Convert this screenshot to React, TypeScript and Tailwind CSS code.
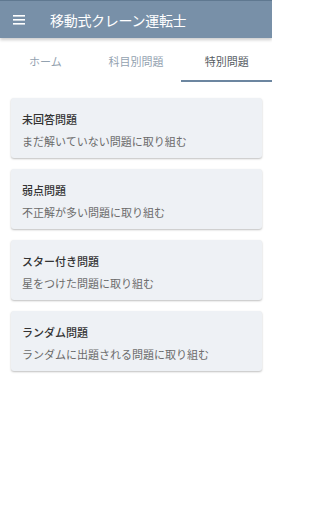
import React, { useState } from "react";

const tabs = ["ホーム", "科目別問題", "特別問題"];

const items = [
  { title: "未回答問題", desc: "まだ解いていない問題に取り組む" },
  { title: "弱点問題", desc: "不正解が多い問題に取り組む" },
  { title: "スター付き問題", desc: "星をつけた問題に取り組む" },
  { title: "ランダム問題", desc: "ランダムに出題される問題に取り組む" },
];

const App = () => {
  const [active, setActive] = useState(2);

  return (
    <div
      className="w-[272px] h-[512px] bg-white overflow-hidden"
      style={{ fontFamily: '"Noto Sans CJK JP", "Noto Sans", sans-serif' }}
    >
      {/* App bar */}
      <header className="relative z-10 h-[38px] bg-[#7890a8] border-t border-[#5f7890] flex items-center shadow-[0_2px_3px_rgba(0,0,0,0.2)]">
        <button className="w-[50px] h-full flex items-center pl-[13px]">
          <svg width="12" height="10" viewBox="0 0 12 10">
            <rect x="0" y="0" width="12" height="1.6" fill="#fff" />
            <rect x="0" y="4" width="12" height="1.6" fill="#fff" />
            <rect x="0" y="8" width="12" height="1.6" fill="#fff" />
          </svg>
        </button>
        <h1 className="text-white text-[14px] leading-none tracking-[-0.3px]">移動式クレーン運転士</h1>
      </header>

      {/* Tabs */}
      <nav className="grid grid-cols-3 h-[43px] mt-[1px]">
        {tabs.map((tab, i) => (
          <button
            key={tab}
            onClick={() => setActive(i)}
            className={`flex items-center justify-center text-[11px] pt-[3px] border-b-2 ${
              i === active
                ? "text-[#555b62] border-[#6c86a0]"
                : "text-[#93a2b0] border-transparent"
            }`}
          >
            {tab}
          </button>
        ))}
      </nav>

      {/* Cards */}
      <div className="flex flex-col gap-[11px] pl-[11px] pr-[10px] pt-[16px]">
        {items.map((item) => (
          <div
            key={item.title}
            className="h-[60px] rounded-[3px] bg-[#eef1f5] shadow-[0_1px_2px_rgba(0,0,0,0.25)] px-[11px] pt-[13px]"
          >
            <div className="text-[11px] leading-[16px] font-medium text-[#333]">{item.title}</div>
            <div className="text-[11px] leading-[16px] mt-[6px] text-[#6b6b6b]">{item.desc}</div>
          </div>
        ))}
      </div>
    </div>
  );
};

export default App;
